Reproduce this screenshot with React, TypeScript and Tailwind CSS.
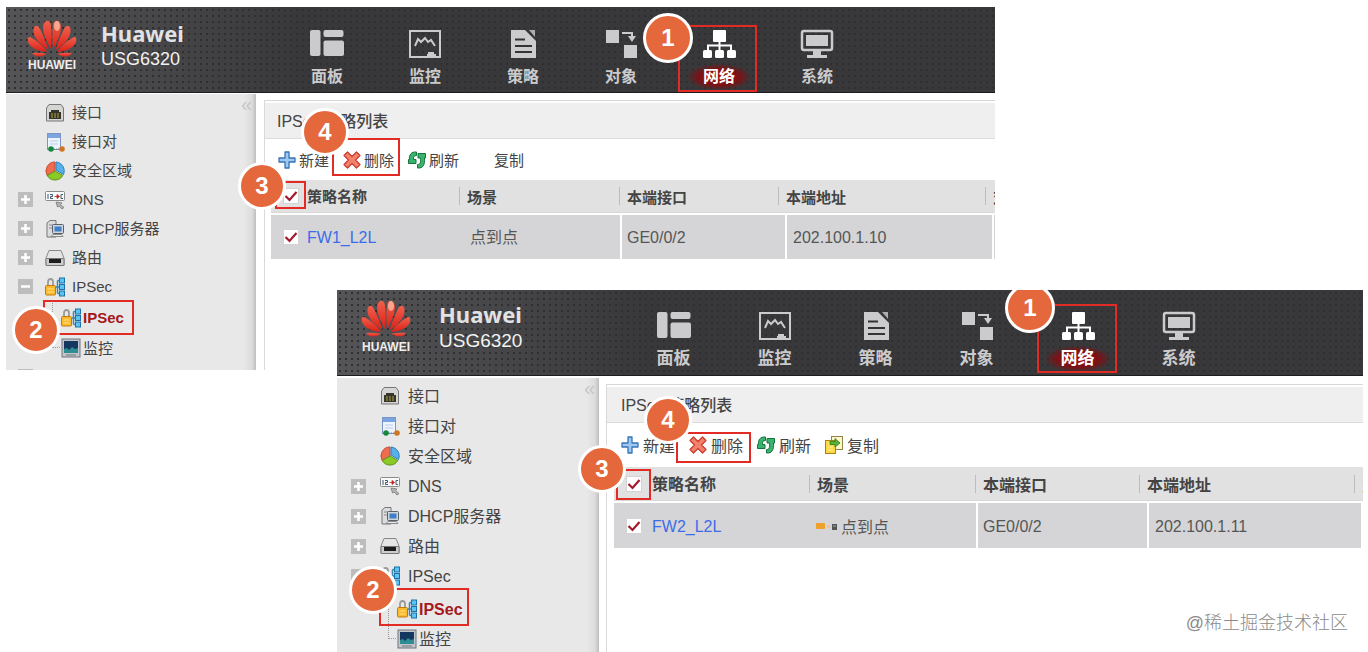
import type { ReactNode } from 'react';
import clsx from 'clsx';

type Size = 'sm' | 'md';

interface TreeItem {
  label: string;
  icon: ReactNode;
  toggle?: 'plus' | 'minus';
}

interface ConsoleProps {
  id: string;
  size: Size;
  policy: string;
  address: string;
  withDetailIcons?: boolean;
  className: string;
  children: ReactNode;
}

function HuaweiLogo() {
  const half = (
    <>
      <path d="M24 30C19.500 22 14.500 12 16.500 5C18.500 0.500 22.500 0.500 23.800 5C25 13 24.600 22 24 30Z" />
      <path d="M21.500 31C14 26 5.500 19 6.500 10C7.500 6 10.500 6 12.500 9C15.500 15 19 23 21.500 31Z" />
      <path d="M20 33C13 32.500 4 30 1 23C0 19 1.500 17 4 18.500C10 22 16 26.500 20 33Z" />
      <path d="M19.500 34.800C16 38 8 39 5 34C10 33.300 15 33.800 19.500 34.800Z" />
    </>
  );
  return (
    <svg viewBox="0 0 50 38" className="h-[38px] w-[50px]" aria-hidden="true">
      <defs>
        <linearGradient id="petal" x1="0" y1="0" x2="0" y2="1">
          <stop offset="0" stopColor="#f0604a" />
          <stop offset="1" stopColor="#dc1f18" />
        </linearGradient>
      </defs>
      <g fill="url(#petal)">
        {half}
        <g transform="translate(50 0) scale(-1 1)">{half}</g>
      </g>
      <ellipse cx="30" cy="7" rx="3" ry="5" fill="#ffc9ad" opacity="0.7" />
    </svg>
  );
}

const navItems = [
  {
    label: '面板',
    icon: (
      <>
        <rect x="0" y="1" width="10.500" height="26" rx="2" />
        <rect x="13.500" y="1" width="20" height="7" rx="2" />
        <rect x="13.500" y="11.500" width="20.500" height="15.500" rx="2" />
      </>
    ),
  },
  {
    label: '监控',
    icon: (
      <>
        <rect x="2" y="2" width="30" height="26" fill="none" stroke="currentColor" strokeWidth="2" />
        <path d="M7 17L10 10L13 13L17 9L20 13L23 11L27 17" fill="none" stroke="currentColor" strokeWidth="2" />
        <path d="M19 28V25H20V23H26V25H28V28Z" />
      </>
    ),
  },
  {
    label: '策略',
    icon: (
      <>
        <path d="M5 1H19L30 12V29H5Z" />
        <path d="M23 1H29V8Z" opacity="0.8" />
        <path d="M9 10.500H19M9 17H26M9 23H26" stroke="#333" strokeWidth="2" />
      </>
    ),
  },
  {
    label: '对象',
    icon: (
      <>
        <rect x="2" y="1" width="13" height="13" />
        <rect x="20" y="16" width="13" height="13" />
        <path d="M18 4H28V8" fill="none" stroke="currentColor" strokeWidth="2" />
        <path d="M24 7H32L28 13Z" />
      </>
    ),
  },
  {
    label: '网络',
    active: true,
    icon: (
      <>
        <rect x="11" y="1" width="13" height="12" rx="1" />
        <rect x="1" y="21" width="9" height="8" rx="1.500" />
        <rect x="13" y="21" width="9" height="8" rx="1.500" />
        <rect x="25" y="21" width="9" height="8" rx="1.500" />
        <path d="M17.500 12V21M6 21V16.500H29V21" fill="none" stroke="currentColor" strokeWidth="2" />
      </>
    ),
  },
  {
    label: '系统',
    icon: (
      <>
        <rect x="2" y="2" width="30" height="19" rx="2" fill="none" stroke="currentColor" strokeWidth="2.500" />
        <rect x="6" y="6" width="22" height="11" />
        <path d="M13 21H21V26H27V29H7V26H13Z" />
      </>
    ),
  },
];

function TreeIcon({ children }: { children: ReactNode }) {
  return (
    <svg viewBox="0 0 20 20" className="size-5 shrink-0" aria-hidden="true">
      {children}
    </svg>
  );
}

const lockNetIcon = (
  <TreeIcon>
    <path d="M3 10V5Q3 2 5.500 2T8 5V10" fill="none" stroke="#9a9a98" strokeWidth="1.800" />
    <rect x="0.500" y="8.500" width="10" height="9.500" rx="1" fill="#fdb92c" stroke="#c47a12" />
    <path d="M2.500 12H8.500M2.500 15H8.500" stroke="#ffe48c" />
    <path d="M11 10H14M12.500 3.500V16.500M12.500 3.500H15M12.500 16.500H15" stroke="#3b86ad" strokeWidth="1.500" fill="none" />
    <g fill="#5cc3f2" stroke="#1a72a8">
      <rect x="14.500" y="1" width="5" height="5" />
      <rect x="14.500" y="7.500" width="5" height="5" />
      <rect x="14.500" y="14" width="5" height="5" />
    </g>
  </TreeIcon>
);

const treeItems: TreeItem[] = [
  {
    label: '接口',
    icon: (
      <TreeIcon>
        <path d="M4 1.500H16L18.500 5V18H1.500V5Z" fill="#d5d5d3" stroke="#777" strokeLinejoin="round" />
        <path d="M4 16V9H6V7H14V9H16V16Z" fill="#35352b" />
        <path d="M7 10V15M10 10V15M13 10V15" stroke="#b3a63c" />
      </TreeIcon>
    ),
  },
  {
    label: '接口对',
    icon: (
      <TreeIcon>
        <rect x="2.500" y="1.500" width="13" height="16" fill="#eef4fd" stroke="#7a96c4" />
        <rect x="3" y="2" width="12" height="4" fill="#7ba4e0" />
        <path d="M5 9H13M5 12H13" stroke="#b9cce8" />
        <path d="M7 17H17" stroke="#777" strokeDasharray="1 1" />
        <circle cx="6" cy="17" r="2.800" fill="#15873e" />
        <circle cx="17" cy="17" r="2.800" fill="#cf7420" />
      </TreeIcon>
    ),
  },
  {
    label: '安全区域',
    icon: (
      <TreeIcon>
        <path d="M10 10V1A9 9 0 0 0 2.200 14.500Z" fill="#ef6d4e" stroke="#c24b30" />
        <path d="M10 10L2.200 14.500A9 9 0 0 0 17.800 14.500Z" fill="#8bc926" stroke="#5d9418" />
        <path d="M11 9V1A9 9 0 0 1 18.500 13.500Z" fill="#58b0ea" stroke="#2f7fb8" />
      </TreeIcon>
    ),
  },
  {
    label: 'DNS',
    toggle: 'plus',
    icon: (
      <TreeIcon>
        <rect x="0.500" y="1.500" width="19" height="9" rx="1" fill="#fafafa" stroke="#8a8a8a" />
        <path d="M3 4V9M5 4.500H7.500V6.500H5.500V8.500H8M18 4.500H16V8.500H18" fill="none" stroke="#3d5876" />
        <path d="M9.500 6.500H12M12 4.500V8.500L14.500 6.500Z" fill="#c4261d" stroke="#c4261d" strokeWidth="0.800" />
        <path d="M11 12L17 13L15.500 14.500L19 17.500L17 19L14 16L12.500 17Z" fill="#b5b5b5" stroke="#777" strokeWidth="0.800" />
      </TreeIcon>
    ),
  },
  {
    label: 'DHCP服务器',
    toggle: 'plus',
    icon: (
      <TreeIcon>
        <path d="M2 4L5 1.500H11V18H2Z" fill="#dcdcdc" stroke="#777" />
        <path d="M4 6H8M4 9H7" stroke="#888" />
        <rect x="7.500" y="5.500" width="11" height="9" rx="1" fill="#cfd4da" stroke="#59616b" />
        <rect x="9.500" y="7.500" width="7" height="5" fill="#3f7fc9" />
        <path d="M6 17.500H18L16.500 15.500H8Z" fill="#eee" stroke="#888" />
      </TreeIcon>
    ),
  },
  {
    label: '路由',
    toggle: 'plus',
    icon: (
      <TreeIcon>
        <path d="M4 2.500H16L19 10V17.500H1V10Z" fill="#e5e5e5" stroke="#888" strokeLinejoin="round" />
        <rect x="1" y="10.500" width="18" height="7" rx="1" fill="#ccc" stroke="#777" />
        <rect x="4" y="11" width="12" height="4" fill="#1c1c1c" />
      </TreeIcon>
    ),
  },
  { label: 'IPSec', toggle: 'minus', icon: lockNetIcon },
];

const screenIcon = (
  <TreeIcon>
    <rect x="1" y="1" width="18" height="18" fill="#c2c6cc" stroke="#6e747d" />
    <rect x="3" y="3" width="14" height="12" fill="#14375f" />
    <path d="M3 11L6 10L8 12L11 9L14 11L17 10V15H3Z" fill="#2d8d93" />
    <path d="M5 17H15" stroke="#777" />
  </TreeIcon>
);

const toolIcons = {
  add: <path d="M7 1H11V7H17V11H11V17H7V11H1V7H7Z" fill="#9cc8f3" stroke="#3773b5" strokeWidth="1.300" strokeLinejoin="round" />,
  remove: (
    <path
      d="M4.500 1L9 5.500L13.500 1L17 4.500L12.500 9L17 13.500L13.500 17L9 12.500L4.500 17L1 13.500L5.500 9L1 4.500Z"
      fill="#f4816c"
      stroke="#c63a2b"
      strokeWidth="1.200"
      strokeLinejoin="round"
    />
  ),
  refresh: (
    <>
      <path d="M8.500 1C3 0.500 1 4 1.500 8.500H0.500V12.500H8V8.500H5.500C5 6 6 4.500 8.500 4.500Z" fill="#3bb36f" stroke="#13743c" strokeLinejoin="round" />
      <path d="M9.500 17C15 17.500 17 14 16.500 7H17.500V2.500H10V7H12.500C13 12 12 13.500 9.500 13.500Z" fill="#3bb36f" stroke="#13743c" strokeLinejoin="round" />
    </>
  ),
  copy: (
    <>
      <rect x="6.500" y="0.500" width="11" height="13" fill="#fff6c9" stroke="#8f8649" />
      <rect x="0.500" y="4.500" width="10" height="13" fill="#ffd83f" stroke="#a58516" />
      <path d="M3 8H8M3 11H8M3 14H8" stroke="#fff3b0" />
      <path d="M5 5.500H10V2.500L15 7L10 11V8.500H5Z" fill="#55b33b" stroke="#2c7a1c" strokeWidth="0.800" />
    </>
  ),
};

function CheckBox({ label }: { label: string }) {
  return (
    <span className="grid size-4">
      <input
        type="checkbox"
        defaultChecked
        aria-label={label}
        className="col-start-1 row-start-1 size-4 appearance-none border border-[#d4d4d4] bg-white"
      />
      <svg viewBox="0 0 16 16" className="pointer-events-none col-start-1 row-start-1 size-4" aria-hidden="true">
        <path d="M2.500 8L6.500 12L13.500 4" fill="none" stroke="#a3182c" strokeWidth="2.200" />
      </svg>
    </span>
  );
}

function Step({ n, className }: { n: number; className: string }) {
  return (
    <span
      className={clsx(
        'absolute flex items-center justify-center rounded-full border-3 border-white bg-[#e4683c] text-2xl font-bold text-white',
        className,
      )}
    >
      {n}
    </span>
  );
}

function Outline({ className }: { className: string }) {
  return <span className={clsx('pointer-events-none absolute border-2 border-[#e22b24]', className)} />;
}

function Toggle({ kind }: { kind: 'plus' | 'minus' }) {
  return (
    <button type="button" aria-label={kind === 'plus' ? '展开' : '折叠'} className="flex size-[15px] shrink-0 bg-[#bdbdbd]">
      <svg viewBox="0 0 15 15" className="size-[15px]" aria-hidden="true">
        <path d={kind === 'plus' ? 'M3 7.500H12M7.500 3V12' : 'M3 7.500H12'} stroke="#fff" strokeWidth="2.500" />
      </svg>
    </button>
  );
}

function Header({ size }: { size: Size }) {
  const md = size === 'md';
  return (
    <header className="flex h-[86px] border-b border-[#1d1d1d] bg-[radial-gradient(circle,#2f2f31_1px,transparent_1px),linear-gradient(90deg,#555557,#474749_15%,#38383a_30%)] bg-[length:6px_6px,100%_100%]">
      <div className={clsx('flex shrink-0', md ? 'w-[286px] gap-[27px] pt-[9px] pl-[23px]' : 'w-[272px] gap-[23px] pt-3 pl-5')}>
        <div className={clsx('flex w-[52px] flex-col items-center', md && 'gap-0.5')}>
          <HuaweiLogo />
          <span className="text-xs leading-4 font-bold text-[#eee]">HUAWEI</span>
        </div>
        <div className="text-[#f2f2f2]">
          <div className={clsx("font-['Noto_Sans'] text-[22px] font-bold text-[#e2e2e4]", md ? 'leading-[30px]' : 'leading-7')}>
            Huawei
          </div>
          <div className={md ? 'text-[19px] leading-6' : 'text-lg leading-6'}>USG6320</div>
        </div>
      </div>
      <nav className="flex">
        {navItems.map((item) => (
          <a
            key={item.label}
            href="#"
            className={clsx(
              'flex flex-col items-center gap-[5px]',
              md ? 'w-[101px] pt-[21px] text-[17px]' : 'w-[98px] pt-[22px] text-base',
              item.active ? 'text-white' : 'text-[#cbcbcd]',
            )}
          >
            <svg viewBox="0 0 34 30" className="h-[30px] w-[34px]" fill="currentColor" aria-hidden="true">
              {item.icon}
            </svg>
            <span
              className={clsx(
                'px-4 leading-[26px] font-bold',
                item.active && 'bg-[radial-gradient(ellipse_at_center,#a30d12,#7a1216_45%,transparent_72%)]',
              )}
            >
              {item.label}
            </span>
          </a>
        ))}
      </nav>
    </header>
  );
}

function Sidebar({ size }: { size: Size }) {
  const md = size === 'md';
  return (
    <aside
      className={clsx(
        'relative shrink-0 bg-[linear-gradient(270deg,#bebebe,#dcdcdc_4px,#e8e8e8_12px)] text-[#444]',
        md ? 'w-[262px] pt-[3px] text-base' : 'w-[250px] pt-1 text-[15px]',
      )}
    >
      <button type="button" aria-label="收起" className="absolute top-0 right-1 text-xl leading-5 text-[#c6c6c6]">
        «
      </button>
      <ul>
        {treeItems.map((item) => (
          <li key={item.label} className={clsx('flex items-center', md ? 'h-[30px] pl-[14px]' : 'h-[29px] pl-3')}>
            <span className={clsx('flex shrink-0', md ? 'w-[29px]' : 'w-[27px]')}>
              {item.toggle && <Toggle kind={item.toggle} />}
            </span>
            {item.icon}
            <a href="#" className={clsx('pt-0.5', md ? 'pl-2' : 'pl-[7px]')}>
              {item.label}
            </a>
          </li>
        ))}
      </ul>
      <ul className={md ? 'pl-[51px]' : 'pl-[46px]'}>
        <li className={clsx('flex items-center border-l border-dotted border-[#999] pl-2', md ? 'h-[35px]' : 'h-[33px]')}>
          {lockNetIcon}
          <a href="#" className="pt-0.5 pl-0.5 font-bold text-[#a5181b]">
            IPSec
          </a>
        </li>
        <li className={clsx('flex items-center', md ? 'h-[26px]' : 'h-7')}>
          <span className={clsx('w-2 shrink-0 self-start border-b border-l border-dotted border-[#999]', md ? 'h-[13px]' : 'h-[14px]')} />
          <span className="pl-px">{screenIcon}</span>
          <a href="#" className="pt-0.5 pl-0.5">
            监控
          </a>
        </li>
      </ul>
      {!md && (
        <div className="flex h-2 overflow-hidden pt-[7px] pl-3">
          <Toggle kind="plus" />
        </div>
      )}
    </aside>
  );
}

function Toolbar({ size, withCopyIcon }: { size: Size; withCopyIcon?: boolean }) {
  const md = size === 'md';
  const actions = [
    { label: '新建', icon: toolIcons.add },
    { label: '删除', icon: toolIcons.remove },
    { label: '刷新', icon: toolIcons.refresh },
    { label: '复制', icon: withCopyIcon ? toolIcons.copy : null },
  ];
  return (
    <div className={clsx('flex gap-[14px] text-[#444]', md ? 'h-11 pl-[14px] text-base' : 'h-[41px] pl-[13px] text-[15px]')}>
      {actions.map((action) => (
        <button key={action.label} type="button" className={clsx('flex items-center', md ? 'gap-1' : 'gap-[3px]')}>
          <svg viewBox="0 0 18 18" className="size-[18px]" aria-hidden="true">
            {action.icon}
          </svg>
          <span className="pt-[3px]">{action.label}</span>
        </button>
      ))}
    </div>
  );
}

function HeadCell({ label, className }: { label: string; className: string }) {
  return (
    <th scope="col" className={clsx('flex items-center overflow-hidden text-left font-bold whitespace-nowrap', className)}>
      <span className="h-[18px] border-l border-[#bcbcbc] pl-[7px] leading-[21px]">{label}</span>
    </th>
  );
}

function PolicyTable({ size, policy, address, withDetailIcons }: Omit<ConsoleProps, 'id' | 'className' | 'children'>) {
  const md = size === 'md';
  return (
    <table className={clsx('block', md ? 'ml-[7px]' : 'ml-[6px]')}>
      <thead className="block">
        <tr className={clsx('flex border-b border-[#d8d8d8] bg-[#e1e1e1] text-[#444]', md ? 'h-[34px] text-base' : 'h-[33px] text-[15px]')}>
          <th scope="col" className={clsx('flex shrink-0 items-center', md ? 'w-[38px] pl-3' : 'w-9 pl-3')}>
            <CheckBox label="全选" />
          </th>
          <th scope="col" className={clsx('flex shrink-0 items-center pt-[3px] font-bold', md ? 'w-[157px]' : 'w-[152px]')}>
            策略名称
          </th>
          <HeadCell label="场景" className={md ? 'w-[166px]' : 'w-[160px]'} />
          <HeadCell label="本端接口" className={md ? 'w-[164px]' : 'w-[159px]'} />
          <HeadCell label="本端地址" className="flex-1" />
          <HeadCell label="对端地址" className={md ? 'w-[9px]' : 'w-[10px]'} />
        </tr>
      </thead>
      <tbody className="block pt-0.5">
        <tr className={clsx('flex text-base text-[#555]', md ? 'h-[45px]' : 'h-11')}>
          <td className={clsx('flex shrink-0 items-center bg-[#d5d5d7] pl-3', md ? 'w-[38px]' : 'w-9')}>
            <CheckBox label={policy} />
          </td>
          <td className={clsx('flex shrink-0 items-center bg-[#d5d5d7] pt-0.5', md ? 'w-[164px]' : 'w-[163px]')}>
            <a href="#" className="text-[#3d6ce8]">
              {policy}
            </a>
          </td>
          <td className={clsx('flex shrink-0 items-center gap-[3px] bg-[#d5d5d7] pt-0.5', md ? 'w-[160px]' : 'w-[150px]')}>
            {withDetailIcons && (
              <svg viewBox="0 0 22 8" className="h-2 w-[22px]" aria-hidden="true">
                <rect x="0" y="0" width="9" height="6" rx="1" fill="#f0a12a" />
                <rect x="11" y="2" width="3" height="3" fill="#ecc994" />
                <rect x="16" y="1" width="5" height="6" fill="#555" />
                <path d="M17 3H20" stroke="#9ab" />
              </svg>
            )}
            <span className={clsx(withDetailIcons && 'pt-[3px]')}>点到点</span>
          </td>
          <td className={clsx('flex shrink-0 items-center border-l-2 border-white bg-[#d5d5d7] pt-0.5 pl-[5px]', md ? 'w-[171px]' : 'w-[165px]')}>
            GE0/0/2
          </td>
          <td className="flex flex-1 items-center border-l-2 border-white bg-[#d5d5d7] pt-0.5 pl-[6px]">{address}</td>
          <td className={clsx('border-l-2 border-white bg-[#d5d5d7]', md ? 'w-[2px]' : 'w-[3px]')} />
        </tr>
      </tbody>
    </table>
  );
}

function Console({ id, size, policy, address, withDetailIcons, className, children }: ConsoleProps) {
  const md = size === 'md';
  return (
    <section aria-labelledby={id} className={clsx('relative overflow-hidden bg-white', className)}>
      <Header size={size} />
      <div className={clsx('flex', md ? 'pt-0.5' : 'pt-px')}>
        <Sidebar size={size} />
        <main className={clsx('mt-[6px] min-w-0 flex-1 border-t border-l border-[#d9d9d9] pt-0.5', md ? 'ml-[7px]' : 'ml-2')}>
          <h2
            id={id}
            className={clsx(
              'flex h-9 items-center border-b border-[#dcdcdc] bg-[#efefef] pt-[3px] text-base font-medium text-[#444]',
              md ? 'pl-[14px]' : 'pl-3',
            )}
          >
            IPSec 策略列表
          </h2>
          <Toolbar size={size} withCopyIcon={withDetailIcons} />
          <PolicyTable size={size} policy={policy} address={address} withDetailIcons={withDetailIcons} />
        </main>
      </div>
      {children}
    </section>
  );
}

export default function App() {
  return (
    <div className="relative bg-white pt-[7px] font-['Liberation_Sans','Noto_Sans_CJK_SC',sans-serif]">
      <Console id="fw1" size="sm" policy="FW1_L2L" address="202.100.1.10" className="mr-[373px] ml-[6px]">
        <Outline className="top-[18px] left-[672px] h-[67px] w-[79px]" />
        <Outline className="top-[131px] left-[326px] h-[38px] w-[68px]" />
        <Outline className="top-[174px] left-[269px] h-7 w-[31px]" />
        <Outline className="top-[293px] left-[37px] h-[35px] w-[91px]" />
        <Step n={1} className="top-[6px] left-[637px] size-[50px]" />
        <Step n={4} className="top-[101px] left-[295px] size-12" />
        <Step n={3} className="top-[155px] left-[232px] size-12" />
        <Step n={2} className="top-[299px] left-[6px] size-12" />
      </Console>
      <Console
        id="fw2"
        size="md"
        policy="FW2_L2L"
        address="202.100.1.11"
        withDetailIcons
        className="-mt-20 mr-[5px] ml-[337px]"
      >
        <Outline className="top-[14px] left-[700px] h-[69px] w-20" />
        <Outline className="top-[142px] left-[339px] h-[31px] w-[75px]" />
        <Outline className="top-[179px] left-[279px] h-[31px] w-[35px]" />
        <Outline className="top-[298px] left-[42px] h-[38px] w-[90px]" />
        <Step n={1} className="-top-[7px] left-[668px] size-[50px]" />
        <Step n={4} className="top-[106px] left-[307px] size-12" />
        <Step n={3} className="top-[155px] left-[241px] size-12" />
        <Step n={2} className="top-[276px] left-[12px] size-12" />
      </Console>
      <p className="absolute right-5 bottom-4 text-lg leading-[26px] font-light text-[#8a8a8a]">@稀土掘金技术社区</p>
    </div>
  );
}
